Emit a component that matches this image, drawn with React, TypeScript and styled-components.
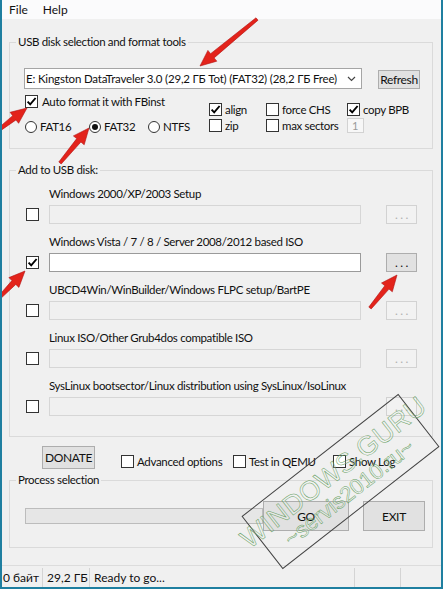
import React from "react";
import styled, { createGlobalStyle } from "styled-components";

const FONT = `Lato, "Open Sans", "Liberation Sans", sans-serif`;

const Global = createGlobalStyle`
  html, body { margin: 0; padding: 0; background: #f0f0f0; }
  * { box-sizing: border-box; }
`;

const Win = styled.div`
  position: relative;
  width: 443px;
  height: 589px;
  overflow: hidden;
  display: flex;
  flex-direction: column;
  background: #f0f0f0;
  border-left: 2px solid #1f7fa0;
  border-right: 2px solid #1f7fa0;
  border-bottom: 2px solid #1f7fa0;
  font-family: ${FONT};
  font-size: 11.5px;
  letter-spacing: -0.33px;
  color: #111;
`;

const MenuBar = styled.div`
  height: 19px;
  display: flex;
  align-items: center;
  gap: 15px;
  padding-left: 7px;
  background: #fbfbfc;
  font-size: 12px;
  letter-spacing: 0;
`;

const Group = styled.fieldset<{ $mt: number }>`
  margin: ${(p) => p.$mt}px 8px 0 7px;
  padding: 0;
  min-width: 0;
  border: 1px solid #dadada;
`;

const Legend = styled.legend`
  margin-left: 6px;
  padding: 0 2px;
  line-height: 14px;
`;

const Body = styled.div<{ $pad: string }>`
  padding: ${(p) => p.$pad};
  display: flex;
  flex-direction: column;
`;

const ComboRow = styled.div`
  display: flex;
  align-items: flex-end;
  gap: 16px;
`;

const Combo = styled.div`
  width: 338px;
  height: 21px;
  background: #fff;
  border: 1px solid #a5a5a5;
  display: flex;
  align-items: center;
  justify-content: space-between;
  padding: 0 5px 0 1px;
  white-space: nowrap;
  letter-spacing: -0.19px;
`;

const Btn = styled.div<{ $w: number; $h: number; $disabled?: boolean }>`
  width: ${(p) => p.$w}px;
  height: ${(p) => p.$h}px;
  display: flex;
  align-items: center;
  justify-content: center;
  background: ${(p) => (p.$disabled ? "#f2f2f2" : "#e1e1e1")};
  border: 1px solid ${(p) => (p.$disabled ? "#d2d2d2" : "#adadad")};
  color: ${(p) => (p.$disabled ? "#b0b0b0" : "#111")};
  font-size: 12px;
`;

const OptionsRow = styled.div`
  display: flex;
  margin-top: 5px;
`;

const LeftCol = styled.div`
  width: 185px;
  display: flex;
  flex-direction: column;
  gap: 12px;
  padding-left: 1px;
  padding-top: 1px;
`;

const RadioRow = styled.div`
  display: grid;
  grid-template-columns: 64px 59px auto;
`;

const RightGrid = styled.div`
  margin-top: 9px;
  display: grid;
  grid-template-columns: 57px 81px auto;
  grid-template-rows: 13px 15px;
  row-gap: 2px;
  align-items: center;
`;

const Item = styled.label<{ $gap?: number }>`
  display: flex;
  align-items: center;
  gap: ${(p) => p.$gap ?? 3}px;
  white-space: nowrap;
  line-height: 13px;
`;

const Box = styled.span`
  width: 13px;
  height: 13px;
  flex: none;
  background: #fff;
  border: 1px solid #333;
  display: flex;
  align-items: center;
  justify-content: center;
`;

const Circle = styled.span`
  width: 12px;
  height: 12px;
  flex: none;
  border-radius: 50%;
  background: #fff;
  border: 1px solid #333;
  display: flex;
  align-items: center;
  justify-content: center;
`;

const Dot = styled.span`
  width: 6px;
  height: 6px;
  border-radius: 50%;
  background: #111;
`;

const SmallInput = styled.div`
  width: 17px;
  height: 15px;
  border: 1px solid #d2d2d2;
  background: #f7f7f7;
  color: #9a9a9a;
  font-size: 11px;
  line-height: 13px;
  padding-left: 4px;
`;

const IsoRow = styled.div<{ $first?: boolean }>`
  display: grid;
  grid-template-columns: 13px 312px 31px;
  grid-template-rows: 14px 19px;
  column-gap: 10px;
  row-gap: 4px;
  margin-top: ${(p) => (p.$first ? 0 : 11)}px;
  align-items: center;
`;

const IsoLabel = styled.div`
  grid-column: 2 / 4;
  grid-row: 1;
  line-height: 14px;
  white-space: nowrap;
`;

const IsoCheck = styled.div`
  grid-column: 1;
  grid-row: 2;
`;

const IsoInput = styled.div<{ $enabled?: boolean }>`
  grid-column: 2;
  grid-row: 2;
  height: 19px;
  background: ${(p) => (p.$enabled ? "#fff" : "#f0f0f0")};
  border: 1px solid ${(p) => (p.$enabled ? "#9a9a9a" : "#d6d6d6")};
`;

const IsoBtnCell = styled.div`
  grid-column: 3;
  grid-row: 2;
  margin-left: 15px;
`;

const BottomRow = styled.div`
  margin: 9px 0 0 40px;
  display: flex;
  align-items: flex-end;
`;

const BottomChecks = styled.div`
  display: grid;
  grid-template-columns: 112px 100px auto;
  margin-left: 26px;
  margin-bottom: 1px;
`;

const ProcessRow = styled.div`
  display: flex;
  align-items: center;
`;

const Progress = styled.div`
  width: 238px;
  height: 16px;
  background: #e6e6e6;
  border: 1px solid #bcbcbc;
`;

const Spacer = styled.span`
  width: 14px;
`;

const StatusBar = styled.div`
  margin-top: 17px;
  flex: 1;
  display: flex;
  border-top: 1px solid #dcdcdc;
  font-size: 12px;
  letter-spacing: 0;
`;

const Cell = styled.div<{ $w?: number }>`
  ${(p) => (p.$w ? `width: ${p.$w}px;` : "flex: 1;")}
  display: flex;
  align-items: center;
  padding-left: 1px;
  white-space: nowrap;
  border-right: 1px solid #d4d4d4;
  margin: 2px 0 0;
  &:last-child { border-right: none; }
`;

const Overlay = styled.svg`
  position: absolute;
  left: -2px;
  top: 0;
  width: 443px;
  height: 589px;
  pointer-events: none;
`;

const Stamp = styled.div`
  position: absolute;
  left: 238.5px;
  top: 447.5px;
  width: 199px;
  height: 67px;
  transform: rotate(-38deg);
  border: 1px solid #444;
  display: flex;
  flex-direction: column;
  align-items: center;
  justify-content: center;
  pointer-events: none;
  font-family: "Liberation Sans", sans-serif;
  letter-spacing: 0;
  color: rgba(255, 255, 255, 0.2);
  -webkit-text-stroke: 0.5px #66a063;
  line-height: 1;
`;

const StampBig = styled.div`
  font-size: 27px;
  letter-spacing: 0.3px;
  white-space: nowrap;
`;

const StampSmall = styled.div`
  font-size: 22px;
  margin-top: 1px;
  white-space: nowrap;
`;

const Check = () => (
  <svg width="11" height="11" viewBox="0 0 11 11">
    <polyline points="1.6,5.6 4.2,8.4 9.6,2" fill="none" stroke="#000" strokeWidth="1.9" />
  </svg>
);

const CheckBox: React.FC<{ checked?: boolean; label?: string; gap?: number }> = ({ checked, label, gap }) => (
  <Item $gap={gap}>
    <Box>{checked && <Check />}</Box>
    {label && <span>{label}</span>}
  </Item>
);

const Radio: React.FC<{ checked?: boolean; label: string }> = ({ checked, label }) => (
  <Item $gap={3}>
    <Circle>{checked && <Dot />}</Circle>
    <span>{label}</span>
  </Item>
);

function arrow(tx: number, ty: number, px: number, py: number) {
  const dx = px - tx, dy = py - ty;
  const L = Math.hypot(dx, dy);
  const ux = dx / L, uy = dy / L;
  const nx = -uy, ny = ux;
  const hl = 16, hw = 7, st = 1.5, sh = 2.7;
  const bx = px - ux * hl, by = py - uy * hl;
  const pts = [
    [tx + nx * st, ty + ny * st],
    [bx + nx * sh, by + ny * sh],
    [bx + nx * hw, by + ny * hw],
    [px, py],
    [bx - nx * hw, by - ny * hw],
    [bx - nx * sh, by - ny * sh],
    [tx - nx * st, ty - ny * st],
  ];
  return pts.map((p) => p.map((v) => v.toFixed(1)).join(",")).join(" ");
}

const ARROWS = [
  [257, 19, 200, 66],
  [-4, 132, 27, 108],
  [60, 163, 89, 128],
  [-3, 300, 25, 271],
  [370, 308, 397, 275],
];

const isoRows = [
  { label: "Windows 2000/XP/2003 Setup" },
  { label: "Windows Vista / 7 / 8 / Server 2008/2012 based ISO", enabled: true },
  { label: "UBCD4Win/WinBuilder/Windows FLPC setup/BartPE" },
  { label: "Linux ISO/Other Grub4dos compatible ISO" },
  { label: "SysLinux bootsector/Linux distribution using SysLinux/IsoLinux" },
];

export default function App() {
  return (
    <>
      <Global />
      <Win>
        <MenuBar>
          <span>File</span>
          <span>Help</span>
        </MenuBar>

        <Group $mt={16}>
          <Legend>USB disk selection and format tools</Legend>
          <Body $pad="19px 0 15px 14px">
            <ComboRow>
              <Combo>
                <span>E: Kingston DataTraveler 3.0 (29,2 ГБ Tot) (FAT32) (28,2 ГБ Free)</span>
                <svg width="9" height="6" viewBox="0 0 9 6">
                  <polyline points="1,1 4.5,4.5 8,1" fill="none" stroke="#444" strokeWidth="1.2" />
                </svg>
              </Combo>
              <Btn $w={42} $h={19}>Refresh</Btn>
            </ComboRow>
            <OptionsRow>
              <LeftCol>
                <CheckBox checked label="Auto format it with FBinst" gap={4} />
                <RadioRow>
                  <Radio label="FAT16" />
                  <Radio checked label="FAT32" />
                  <Radio label="NTFS" />
                </RadioRow>
              </LeftCol>
              <RightGrid>
                <CheckBox checked label="align" />
                <CheckBox label="force CHS" />
                <CheckBox checked label="copy BPB" />
                <CheckBox label="zip" />
                <CheckBox label="max sectors" />
                <SmallInput>1</SmallInput>
              </RightGrid>
            </OptionsRow>
          </Body>
        </Group>

        <Group $mt={14}>
          <Legend>Add to USB disk:</Legend>
          <Body $pad="10px 0 20px 16px">
            {isoRows.map((r, i) => (
              <IsoRow key={r.label} $first={i === 0}>
                <IsoLabel>{r.label}</IsoLabel>
                <IsoCheck>
                  <CheckBox checked={r.enabled} />
                </IsoCheck>
                <IsoInput $enabled={r.enabled} />
                <IsoBtnCell>
                  <Btn $w={31} $h={19} $disabled={!r.enabled}>. . .</Btn>
                </IsoBtnCell>
              </IsoRow>
            ))}
          </Body>
        </Group>

        <BottomRow>
          <Btn $w={53} $h={23}>DONATE</Btn>
          <BottomChecks>
            <CheckBox label="Advanced options" />
            <CheckBox label="Test in QEMU" />
            <CheckBox label="Show Log" />
          </BottomChecks>
        </BottomRow>

        <Group $mt={4}>
          <Legend>Process selection</Legend>
          <Body $pad="14px 0 16px 15px">
            <ProcessRow>
              <Progress />
              <Btn $w={86} $h={30}>GO</Btn>
              <Spacer />
              <Btn $w={62} $h={30}>EXIT</Btn>
            </ProcessRow>
          </Body>
        </Group>

        <StatusBar>
          <Cell $w={41}>0 байт</Cell>
          <Cell $w={47}>&nbsp;29,2 ГБ</Cell>
          <Cell $w={265}>&nbsp;Ready to go...</Cell>
          <Cell $w={46} />
          <Cell />
        </StatusBar>

        <Stamp>
          <StampBig>WINDOWS.GURU</StampBig>
          <StampSmall>~servis2010.ru~</StampSmall>
        </Stamp>

        <Overlay viewBox="0 0 443 589">
          {ARROWS.map(([a, b, c, d], i) => (
            <polygon key={i} points={arrow(a, b, c, d)} fill="#e3231b" stroke="#b01212" strokeWidth="0.6" />
          ))}
        </Overlay>
      </Win>
    </>
  );
}
